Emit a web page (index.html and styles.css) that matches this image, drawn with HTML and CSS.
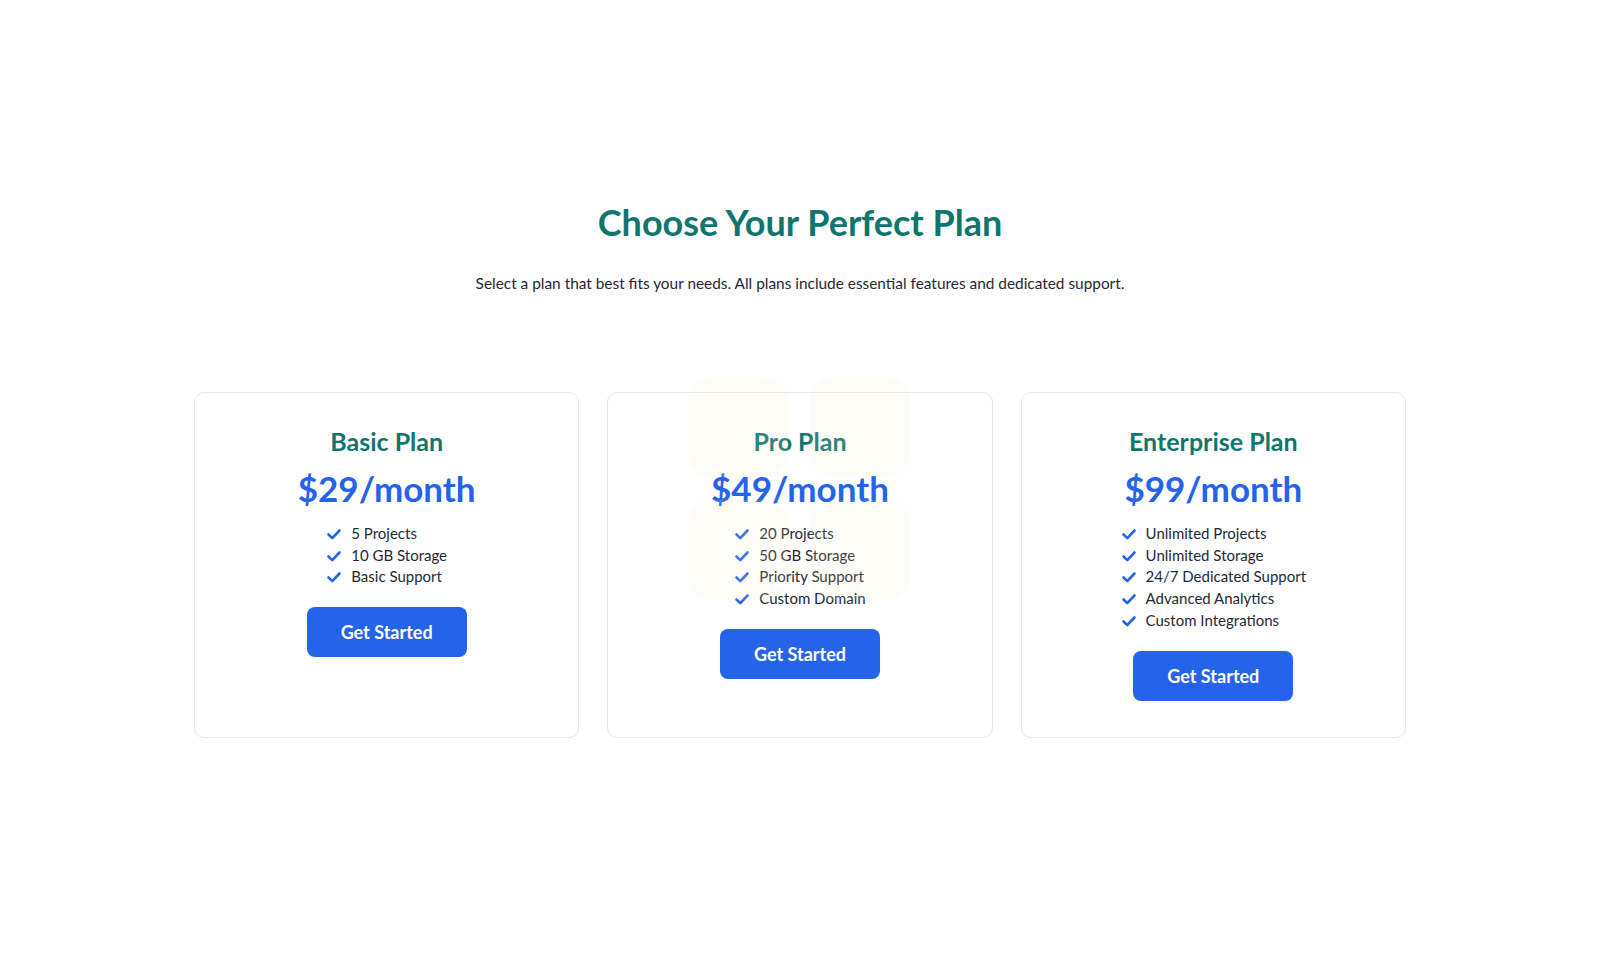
FILE: index.html
```html
<!DOCTYPE html>
<html lang="en">
<head>
<meta charset="utf-8">
<title>Choose Your Perfect Plan</title>
<link rel="stylesheet" href="styles.css">
</head>
<body>
<section class="pricing">
  <h1 class="pricing-title">Choose Your Perfect Plan</h1>
  <p class="pricing-subtitle">Select a plan that best fits your needs. All plans include essential features and dedicated support.</p>
  <div class="plans">
    <div class="plan">
      <h3 class="plan-name">Basic Plan</h3>
      <p class="plan-price">$29/month</p>
      <ul class="features">
        <li><svg class="check" viewBox="0 0 16 16"><path d="M2.5 8.5l3.8 3.6L13.5 4.5"/></svg>5 Projects</li>
        <li><svg class="check" viewBox="0 0 16 16"><path d="M2.5 8.5l3.8 3.6L13.5 4.5"/></svg>10 GB Storage</li>
        <li><svg class="check" viewBox="0 0 16 16"><path d="M2.5 8.5l3.8 3.6L13.5 4.5"/></svg>Basic Support</li>
      </ul>
      <button class="cta">Get Started</button>
    </div>
    <div class="plan plan-pro">
      <div class="deco" aria-hidden="true"><span></span><span></span><span></span><span></span></div>
      <h3 class="plan-name">Pro Plan</h3>
      <p class="plan-price">$49/month</p>
      <ul class="features">
        <li><svg class="check" viewBox="0 0 16 16"><path d="M2.5 8.5l3.8 3.6L13.5 4.5"/></svg>20 Projects</li>
        <li><svg class="check" viewBox="0 0 16 16"><path d="M2.5 8.5l3.8 3.6L13.5 4.5"/></svg>50 GB Storage</li>
        <li><svg class="check" viewBox="0 0 16 16"><path d="M2.5 8.5l3.8 3.6L13.5 4.5"/></svg>Priority Support</li>
        <li><svg class="check" viewBox="0 0 16 16"><path d="M2.5 8.5l3.8 3.6L13.5 4.5"/></svg>Custom Domain</li>
      </ul>
      <button class="cta">Get Started</button>
    </div>
    <div class="plan">
      <h3 class="plan-name">Enterprise Plan</h3>
      <p class="plan-price">$99/month</p>
      <ul class="features">
        <li><svg class="check" viewBox="0 0 16 16"><path d="M2.5 8.5l3.8 3.6L13.5 4.5"/></svg>Unlimited Projects</li>
        <li><svg class="check" viewBox="0 0 16 16"><path d="M2.5 8.5l3.8 3.6L13.5 4.5"/></svg>Unlimited Storage</li>
        <li><svg class="check" viewBox="0 0 16 16"><path d="M2.5 8.5l3.8 3.6L13.5 4.5"/></svg>24/7 Dedicated Support</li>
        <li><svg class="check" viewBox="0 0 16 16"><path d="M2.5 8.5l3.8 3.6L13.5 4.5"/></svg>Advanced Analytics</li>
        <li><svg class="check" viewBox="0 0 16 16"><path d="M2.5 8.5l3.8 3.6L13.5 4.5"/></svg>Custom Integrations</li>
      </ul>
      <button class="cta">Get Started</button>
    </div>
  </div>
</section>
</body>
</html>
```

FILE: styles.css
```css
* { box-sizing: border-box; }

body {
  margin: 0;
  background: #ffffff;
  font-family: "Lato", "Noto Sans", "Liberation Sans", sans-serif;
  color: #1f2937;
}

.pricing {
  width: 1212px;
  margin: 0 auto;
  padding-top: 200px;
  text-align: center;
}

.pricing-title {
  margin: 0;
  font-size: 36px;
  line-height: 44px;
  font-weight: 700;
  color: #0f766e;
}

.pricing-subtitle {
  margin: 28px 0 0;
  font-size: 15.4px;
  line-height: 22px;
  color: #1f2937;
}

.plans {
  margin-top: 98px;
  display: grid;
  grid-template-columns: repeat(3, 1fr);
  gap: 28px;
}

.plan {
  position: relative;
  border: 1px solid #e5e7eb;
  border-radius: 10px;
  background: #ffffff;
  padding: 30px 24px 36px;
  display: flex;
  flex-direction: column;
  align-items: center;
}

.plan > *:not(.deco) { position: relative; z-index: 1; }

.deco {
  position: absolute;
  left: 80px;
  top: -16px;
  display: grid;
  grid-template-columns: 100px 100px;
  gap: 23px 22px;
  z-index: 2;
  pointer-events: none;
}

.deco span {
  display: block;
  width: 100px;
  height: 100px;
  border-radius: 24px;
  background: rgba(240, 232, 190, 0.14);
}

.plan-name {
  margin: 0;
  font-size: 25px;
  line-height: 36px;
  font-weight: 700;
  color: #0f766e;
}

.plan-price {
  margin: 7px 0 0;
  font-size: 35px;
  line-height: 44px;
  font-weight: 700;
  color: #2563eb;
}

.features {
  list-style: none;
  margin: 13px 0 0;
  padding: 0;
  text-align: left;
}

.features li {
  display: flex;
  align-items: center;
  gap: 9px;
  font-size: 15px;
  line-height: 21.7px;
  color: #1f2937;
}

.check {
  width: 16px;
  height: 16px;
  flex: none;
  fill: none;
  stroke: #2563eb;
  stroke-width: 2.6;
  stroke-linecap: round;
  stroke-linejoin: round;
}

.cta {
  margin-top: 19px;
  width: 160px;
  height: 50px;
  border: none;
  border-radius: 8px;
  background: #2563eb;
  color: #ffffff;
  font-family: inherit;
  font-size: 18px;
  font-weight: 700;
  cursor: pointer;
}
```
